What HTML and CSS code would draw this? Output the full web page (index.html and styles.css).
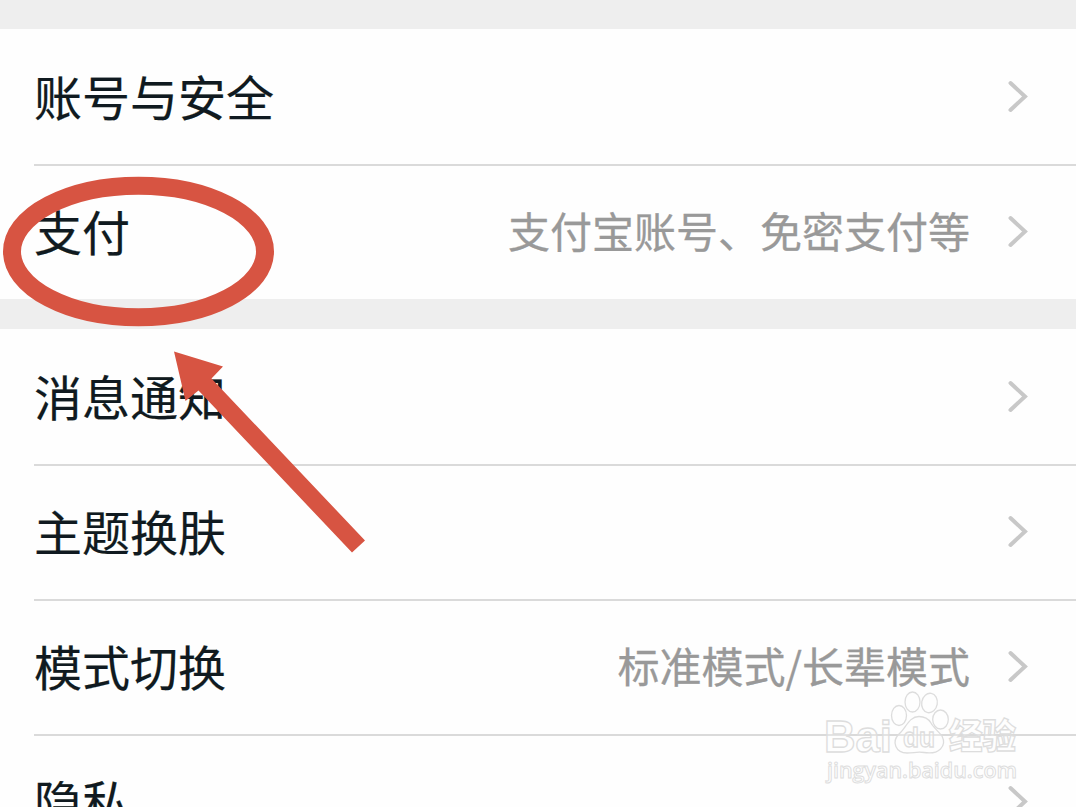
FILE: index.html
```html
<!DOCTYPE html>
<html lang="zh-CN">
<head>
    <meta charset="UTF-8">
    <meta name="viewport" content="width=device-width, initial-scale=1.0">
    <title>设置</title>
    <link rel="stylesheet" href="styles.css">
</head>
<body>
    <div class="settings">
        <div class="group">
            <div class="row">
                <span class="label">账号与安全</span>
                <svg class="chevron" viewBox="0 0 22 34"><path d="M3.5 3 L18 16.5 L3.5 30"/></svg>
            </div>
            <div class="row">
                <span class="label">支付</span>
                <span class="value">支付宝账号、免密支付等</span>
                <svg class="chevron" viewBox="0 0 22 34"><path d="M3.5 3 L18 16.5 L3.5 30"/></svg>
            </div>
        </div>

        <div class="group">
            <div class="row">
                <span class="label">消息通知</span>
                <svg class="chevron" viewBox="0 0 22 34"><path d="M3.5 3 L18 16.5 L3.5 30"/></svg>
            </div>
            <div class="row">
                <span class="label">主题换肤</span>
                <svg class="chevron" viewBox="0 0 22 34"><path d="M3.5 3 L18 16.5 L3.5 30"/></svg>
            </div>
            <div class="row">
                <span class="label">模式切换</span>
                <span class="value">标准模式/长辈模式</span>
                <svg class="chevron" viewBox="0 0 22 34"><path d="M3.5 3 L18 16.5 L3.5 30"/></svg>
            </div>
            <div class="row">
                <span class="label">隐私</span>
                <svg class="chevron" viewBox="0 0 22 34"><path d="M3.5 3 L18 16.5 L3.5 30"/></svg>
            </div>
        </div>
    </div>

    <svg class="marks" viewBox="0 0 1076 807">
        <ellipse cx="138.5" cy="251.5" rx="126.5" ry="65.8"/>
        <polygon points="174,351.5 223,366.5 211.5,378.5 365,540.5 352,552.5 198.5,390.5 185.5,401"/>
    </svg>

    <svg class="watermark" viewBox="0 0 210 100">
        <text class="wm-logo" x="4" y="70" textLength="68" lengthAdjust="spacingAndGlyphs">Bai</text>
        <ellipse cx="79" cy="33.5" rx="7.5" ry="10"/>
        <ellipse cx="92.5" cy="20" rx="7.5" ry="10"/>
        <ellipse cx="109.5" cy="21" rx="7.8" ry="9.8" transform="rotate(10 109.5 21)"/>
        <ellipse cx="120.5" cy="37.5" rx="7.8" ry="9.5"/>
        <path d="M99 34.5 C89 34.5 86 46 79 52 C71 60 76 71 87 71 C94 71 97 69.5 104 70.5 C119 73 127 64 122 54 C117 48 113 45 111 41 C108 36 104 34.5 99 34.5 Z"/>
        <text class="wm-du" x="83" y="65" textLength="32" lengthAdjust="spacingAndGlyphs">du</text>
        <text class="wm-cn" x="129" y="67" textLength="67" lengthAdjust="spacingAndGlyphs">经验</text>
        <text class="wm-url" x="7" y="96" textLength="190" lengthAdjust="spacingAndGlyphs">jingyan.baidu.com</text>
    </svg>
</body>
</html>
```
FILE: styles.css
```css
* {
    box-sizing: border-box;
}

body {
    position: relative;
    width: 1076px;
    height: 807px;
    margin: 0;
    overflow: hidden;
    background: #eeeeee;
    color: #101a20;
    font-family: "Noto Sans CJK SC", sans-serif;
}

.settings {
    display: flex;
    flex-direction: column;
    gap: 30px;
    height: 807px;
    padding-top: 29px;
    overflow: hidden;
}

.group {
    flex-shrink: 0;
    padding-left: 34px;
    background: #fefefe;
}

.row {
    display: flex;
    align-items: center;
    height: 135px;
    padding-right: 47px;
}

.row + .row {
    box-shadow: inset 0 2px 0 #dadada;
}

.label {
    flex: 1;
    padding-bottom: 4px;
    font-size: 48px;
    line-height: 70px;
    -webkit-text-stroke: 0.2px #101a20;
}

.value {
    margin-right: 37px;
    padding-bottom: 3px;
    color: #999999;
    font-size: 42px;
    line-height: 62px;
    -webkit-text-stroke: 0.3px #999999;
}

.chevron {
    width: 22px;
    height: 34px;
    fill: none;
    stroke: #c8c8c8;
    stroke-width: 4;
    stroke-linecap: round;
    stroke-linejoin: miter;
}

.marks {
    position: absolute;
    top: 0;
    left: 0;
    width: 1076px;
    height: 807px;
}

.marks ellipse {
    fill: none;
    stroke: #d75442;
    stroke-width: 18;
}

.marks polygon {
    fill: #d75442;
}

.watermark {
    position: absolute;
    top: 682px;
    left: 820px;
    width: 210px;
    height: 100px;
    overflow: visible;
    fill: rgba(255, 255, 255, 0.3);
    stroke: #dddddd;
    stroke-width: 1.3;
}

.wm-logo {
    font: bold 44px "Liberation Sans", sans-serif;
}

.wm-du {
    font: bold 28px "Liberation Sans", sans-serif;
}

.wm-cn {
    font: 900 35px "Noto Sans CJK SC", sans-serif;
}

.wm-url {
    font: 600 22px "Open Sans", sans-serif;
    stroke-width: 1;
}
```
